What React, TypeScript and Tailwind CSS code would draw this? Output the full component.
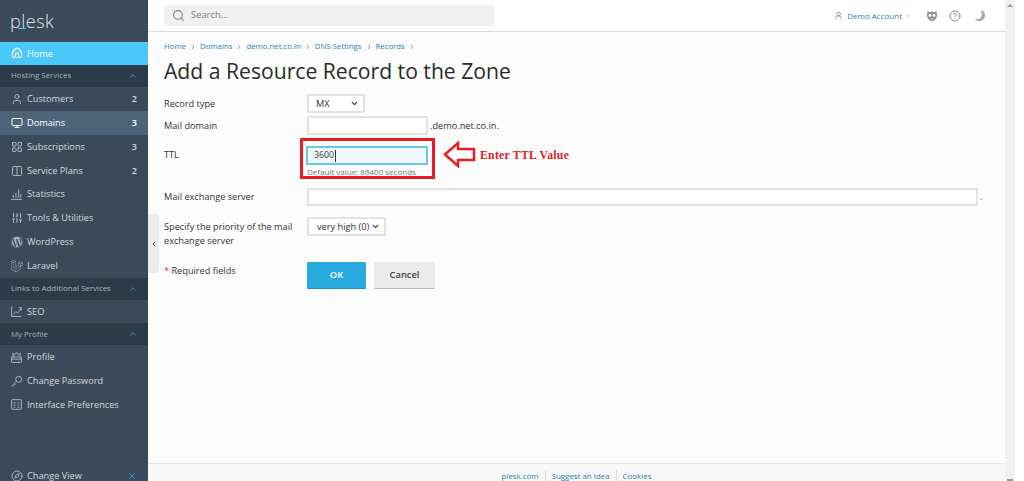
import React, { FC, ReactNode } from "react";
import {
  ChevronDown,
  ChevronLeft,
  ChevronRight,
  ChevronUp,
  CircleHelp,
  Columns2,
  Compass,
  Home,
  LayoutGrid,
  Monitor,
  Search,
  SlidersVertical,
  User,
  UserRound,
  X,
} from "lucide-react";
import { FaLaravel, FaWordpress } from "react-icons/fa";

const font = "font-['Open_Sans','Noto_Sans',sans-serif]";

const iconProps = {
  width: 13,
  height: 13,
  viewBox: "0 0 24 24",
  fill: "none",
  stroke: "currentColor",
  strokeWidth: 1.8,
};

const StatsIcon: FC = () => (
  <svg {...iconProps}>
    <path d="M2 21h20M6 18v-5M11 18V9M16 18V3M20 18v-7" />
  </svg>
);

const SeoIcon: FC = () => (
  <svg {...iconProps}>
    <path d="M3 3v18h18M6 17l5-5 3 3 7-9M16 5h5v5" />
  </svg>
);

const ProfileIcon: FC = () => (
  <svg {...iconProps}>
    <path d="M3 11h18v9a1 1 0 0 1-1 1H4a1 1 0 0 1-1-1zM6 11 5 4l4 3 3-4 3 4 4-3-1 7M3 15h18" />
  </svg>
);

const KeyIcon: FC = () => (
  <svg {...iconProps}>
    <circle cx="16" cy="8" r="5.5" />
    <path d="M12 12 3 21M5 19l2.5 2.5M8 16l2 2" />
  </svg>
);

const PrefsIcon: FC = () => (
  <svg {...iconProps}>
    <rect x="3" y="3" width="18" height="18" rx="2" />
    <path d="M7 9h3M14 9h3M7 13h3M14 13h3M7 17h3M14 17h3" />
  </svg>
);

const ShieldIcon: FC = () => (
  <svg width="12" height="12" viewBox="0 0 24 24" className="ml-[15px]">
    <path d="M12 2 15 4.500 21 3 22 11C22 17 17 21 12 23 7 21 2 17 2 11L3 3 9 4.500Z" fill="#8f8f8f" />
    <circle cx="8" cy="11" r="2.8" fill="#fff" />
    <circle cx="16" cy="11" r="2.8" fill="#fff" />
    <path d="M9 17h6l-3 3z" fill="#fff" />
  </svg>
);

const MoonIcon: FC = () => (
  <svg width="12" height="13" viewBox="0 0 24 26" className="ml-[13px]">
    <path d="M14 2C21 5 23 10 22 15 21 21 15 25 8 24 5 23.600 3 22 2 20 12 23 19 15 14 2Z" fill="#a8a8a8" />
  </svg>
);

type ItemProps = { icon: ReactNode; label: string; count?: number; active?: boolean };

const NavItem: FC<ItemProps> = ({ icon, label, count, active }) => (
  <div
    className={`flex h-[23.8px] items-center pl-[10px] pr-[11px] text-[9.2px] ${
      active ? "bg-[#4d6478] text-white" : "text-[#d0d7dd]"
    }`}
  >
    <span className="flex w-[13px] justify-center text-[#a9b5bf]">{icon}</span>
    <span className="ml-[4px] flex-1">{label}</span>
    {count ? <span className="text-[9px] font-semibold">{count}</span> : null}
  </div>
);

const NavGroup: FC<{ label: string }> = ({ label }) => (
  <div className="flex h-[22px] items-center justify-between bg-[#2c3b49] pl-[11px] pr-[10px] text-[7.9px] text-[#a6b2bc]">
    <span>{label}</span>
    <ChevronUp size={10} className="text-[#28a9d8]" />
  </div>
);

const Sidebar: FC = () => (
  <aside className="flex h-[488px] w-[148px] shrink-0 flex-col self-start bg-[#3b4a5a]">
    <div className="relative flex h-[41.7px] items-start pl-[10px] pt-[10px] text-[18px] leading-[22px] font-light tracking-[0.5px] text-[#dfe5ea]">
      plesk
      <span className="absolute left-[18px] top-[28px] h-[1px] w-2 bg-[#4bc8fa]" />
    </div>
    <div className="flex h-[23.6px] items-center bg-[#4bc8fa] pl-[10px] text-[9.2px] text-white">
      <span className="flex w-[13px] justify-center">
        <Home size={12} strokeWidth={2.2} />
      </span>
      <span className="ml-[4px]">Home</span>
    </div>
    <NavGroup label="Hosting Services" />
    <NavItem icon={<User size={12} />} label="Customers" count={2} />
    <NavItem icon={<Monitor size={12} className="text-white" />} label="Domains" count={3} active />
    <NavItem icon={<LayoutGrid size={12} />} label="Subscriptions" count={3} />
    <NavItem icon={<Columns2 size={12} />} label="Service Plans" count={2} />
    <NavItem icon={<StatsIcon />} label="Statistics" />
    <NavItem icon={<SlidersVertical size={12} />} label="Tools & Utilities" />
    <NavItem icon={<FaWordpress size={12} />} label="WordPress" />
    <NavItem icon={<FaLaravel size={12} />} label="Laravel" />
    <NavGroup label="Links to Additional Services" />
    <NavItem icon={<SeoIcon />} label="SEO" />
    <NavGroup label="My Profile" />
    <NavItem icon={<ProfileIcon />} label="Profile" />
    <NavItem icon={<KeyIcon />} label="Change Password" />
    <NavItem icon={<PrefsIcon />} label="Interface Preferences" />
    <div className="mt-auto flex h-6 items-center pl-[10px] pr-[11px] text-[9.2px] text-[#d0d7dd]">
      <span className="flex w-[13px] justify-center text-[#a9b5bf]">
        <Compass size={12} />
      </span>
      <span className="ml-[4px] flex-1">Change View</span>
      <X size={10} className="text-[#28a9d8]" />
    </div>
  </aside>
);

const TopBar: FC = () => (
  <header className="flex h-8 shrink-0 items-center border-b border-[#d9d9d9] bg-white pl-4 pr-[19px] shadow-[0_1px_1px_rgba(0,0,0,0.05)]">
    <div className="flex h-[21px] w-[330px] items-center gap-[6px] rounded-[3px] bg-[#f0f0f0] pl-2 text-[9.4px] text-[#808080]">
      <Search size={13} />
      Search...
    </div>
    <div className="ml-auto flex items-center text-[#8a8a8a]">
      <UserRound size={9} />
      <span className="ml-[4px] text-[8px] text-[#2a84ad]">Demo Account</span>
      <ChevronDown size={6} className="ml-[3px]" />
      <ShieldIcon />
      <CircleHelp size={12} className="ml-[11px]" />
      <MoonIcon />
    </div>
  </header>
);

const Crumb: FC<{ label: string }> = ({ label }) => (
  <>
    <span className="text-[#2a84ad]">{label}</span>
    <ChevronRight size={8} className="mx-[3px] text-[#777]" />
  </>
);

const Row: FC<{ label: ReactNode; className?: string; children: ReactNode }> = ({
  label,
  className,
  children,
}) => (
  <div className={`flex ${className ?? ""}`}>
    <div className="w-[143px] shrink-0 text-[9.2px] leading-[13.5px] text-[#333]">{label}</div>
    <div className="flex-1">{children}</div>
  </div>
);

const fieldClass = "border-2 border-[#e3e3e3] bg-white";

const Form: FC = () => (
  <div className="flex flex-col">
    <Row label="Record type" className="h-[19px] items-center">
      <div className={`flex h-[19px] w-[58px] items-center justify-between pl-[7px] pr-1 text-[9.2px] text-[#333] ${fieldClass}`}>
        MX
        <ChevronDown size={9} strokeWidth={3} />
      </div>
    </Row>
    <Row label="Mail domain" className="mt-[3px] h-[19px] items-center">
      <div className="flex items-center">
        <div className={`h-[19px] w-[121px] ${fieldClass}`} />
        <span className="ml-[2px] text-[9.2px] text-[#333]">.demo.net.co.in.</span>
      </div>
    </Row>
    <Row label={<div className="pt-[2px]">TTL</div>} className="mt-[11px] h-[42px]">
      <div className="relative">
        <div className="flex h-[19px] w-[122px] -translate-x-px items-center rounded-[1px] border-2 border-[#6cc6ea] bg-[#f0f8fd] pl-[6px] text-[8.8px] text-[#333]">
          3600
          <span className="ml-[1px] h-3 w-px bg-[#333]" />
        </div>
        <div className="mt-px text-[8px] leading-3 text-[#777]">Default value: 86400 seconds</div>
        <div className="absolute -left-[7px] -top-[8px] h-[41px] w-[135px] border-[3px] border-[#ea1c24]" />
        <svg className="absolute left-[136px] -top-[5px]" width="33" height="27" viewBox="0 0 33 27">
          <path d="M2 13.500 L15 2 V8 H31 V19 H15 V25 Z" fill="white" stroke="#ea1c24" strokeWidth="2.5" />
        </svg>
        <span className="absolute left-[173px] top-[1px] whitespace-nowrap font-['Liberation_Serif',serif] text-[11.7px] font-bold tracking-[0.3px] text-[#e02020]">
          Enter TTL Value
        </span>
      </div>
    </Row>
    <Row label="Mail exchange server" className="h-[18px] items-center">
      <div className="flex items-center">
        <div className={`h-[18px] w-[671px] ${fieldClass}`} />
        <span className="ml-[2px] text-[9.2px] text-[#333]">.</span>
      </div>
    </Row>
    <Row
      label={
        <div className="pt-[3px]">
          Specify the priority of the mail
          <br />
          exchange server
        </div>
      }
      className="mt-[11px] h-[45px]"
    >
      <div className={`flex h-[19px] w-[79px] items-center justify-between pl-2 pr-1 text-[9.2px] whitespace-nowrap text-[#333] ${fieldClass}`}>
        very high (0)
        <ChevronDown size={9} strokeWidth={3} />
      </div>
    </Row>
    <Row
      label={
        <div className="pt-[2px]">
          <span className="text-[#d02f4a]">*</span> Required fields
        </div>
      }
    >
      <div className="flex gap-2">
        <div className="flex h-[26px] w-[59px] items-center justify-center rounded-[1px] bg-[#28aae1] text-[9.3px] font-semibold text-white shadow-[0_1px_0_#1f8fc0]">
          OK
        </div>
        <div className="flex h-[26px] w-[61px] items-center justify-center rounded-[1px] bg-[#ebebeb] text-[9.3px] font-semibold text-[#444] shadow-[0_1px_0_#bbb]">
          Cancel
        </div>
      </div>
    </Row>
  </div>
);

const App: FC = () => (
  <div className={`flex h-[481px] w-[1024px] overflow-hidden bg-white ${font}`}>
    <Sidebar />
    <div className="flex h-[481px] w-[857px] flex-col">
      <TopBar />
      <main className="relative flex-1 bg-[#fcfcfc] pl-4 pt-[9px]">
        <div className="absolute left-0 top-[182px] flex h-[59px] w-[11px] items-center justify-center rounded-r-[3px] bg-[#ececec] text-[#444]">
          <ChevronLeft size={8} strokeWidth={3} />
        </div>
        <div className="flex h-3 items-center text-[7.8px]">
          <Crumb label="Home" />
          <Crumb label="Domains" />
          <Crumb label="demo.net.co.in" />
          <Crumb label="DNS Settings" />
          <Crumb label="Records" />
        </div>
        <h1 className="mt-[3px] mb-[8px] text-[21.15px] leading-[30px] font-normal text-[#2b2b2b]">
          Add a Resource Record to the Zone
        </h1>
        <Form />
      </main>
      <footer className="flex h-[18px] shrink-0 items-start justify-center border-t border-[#e4e4e4] bg-[#f7f7f7] pt-[6px] text-[7.9px] leading-3 text-[#2a84ad]">
        <span className="border-r border-[#ddd] pr-[6px]">plesk.com</span>
        <span className="border-r border-[#ddd] px-[6px]">Suggest an Idea</span>
        <span className="pl-[6px]">Cookies</span>
      </footer>
    </div>
    <div className="relative h-[481px] w-[10px] shrink-0 bg-[#f1f1f1]">
      <span className="absolute left-[2px] top-[4px] h-0 w-0 border-x-[3px] border-b-[3px] border-x-transparent border-b-[#9a9a9a]" />
      <span className="absolute bottom-0 left-[2px] h-[2px] w-[6px] bg-[#9a9a9a]" />
    </div>
    <div className="w-[9px] shrink-0 bg-white" />
  </div>
);

export default App;
